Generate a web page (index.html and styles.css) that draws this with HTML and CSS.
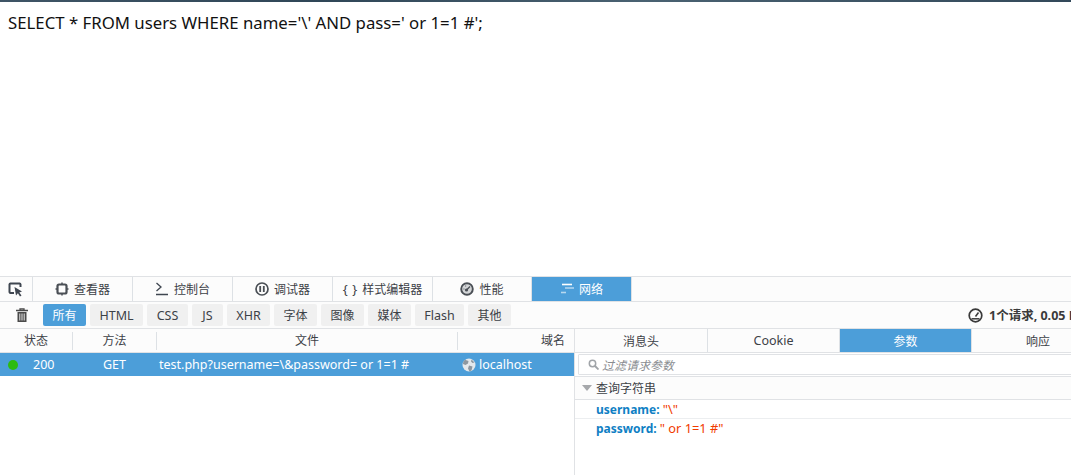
FILE: index.html
```html
<!DOCTYPE html>
<html lang="zh">
<head>
<meta charset="utf-8">
<title>Network</title>
<link rel="stylesheet" href="styles.css">
</head>
<body>
<div class="topstrip"></div>
<main class="page">SELECT * FROM users WHERE name='\' AND pass=' or 1=1 #';</main>
<section class="devtools">
  <nav class="tabs">
    <div class="tab pick"><svg width="16" height="16" viewBox="0 0 16 16"><path d="M6 12H2.500A1.200 1.200 0 0 1 1.500 11V3.500A1.200 1.200 0 0 1 2.500 2.500H11.500A1.200 1.200 0 0 1 12.500 3.500V6" fill="none" stroke="#3f4650" stroke-width="2"/><path d="M6.500 6 L14 10.500 L11.300 11.400 L13.500 14.600 L12 15.500 L9.900 12.300 L8 14.500Z" fill="#3f4650"/></svg></div>
    <div class="tab"><svg width="14" height="14" viewBox="0 0 14 14"><rect x="2.500" y="2.500" width="9" height="9" rx="1.500" fill="none" stroke="#4a4f55" stroke-width="2.200"/><path d="M7 .5v2M7 11.500v2M.5 7h2M11.500 7h2" stroke="#4a4f55" stroke-width="1.500"/></svg><span>查看器</span></div>
    <div class="tab"><svg width="14" height="14" viewBox="0 0 14 14"><path d="M1.500 1 L6 5 L1.500 9M1 12.500H13" fill="none" stroke="#3f4650" stroke-width="1.300"/></svg><span>控制台</span></div>
    <div class="tab"><svg width="14" height="14" viewBox="0 0 14 14"><circle cx="7" cy="7" r="6" fill="none" stroke="#4a4f55" stroke-width="1.700"/><path d="M5.200 4v6M8.800 4v6" stroke="#4a4f55" stroke-width="1.800"/></svg><span>调试器</span></div>
    <div class="tab"><span class="braces">{ }</span><span>样式编辑器</span></div>
    <div class="tab perf"><svg width="14" height="14" viewBox="0 0 14 14"><circle cx="7" cy="7" r="5.800" fill="#d4d6d8" stroke="#4a4f55" stroke-width="1.900"/><circle cx="6.500" cy="8" r="1.600" fill="#4a4f55"/><path d="M6.500 8L10 4.500" stroke="#4a4f55" stroke-width="1.300"/><path d="M3.300 7h1.200M5 4h1.200" stroke="#6a6f75" stroke-width="1"/></svg><span>性能</span></div>
    <div class="tab active"><svg width="14" height="14" viewBox="0 0 14 14"><path d="M2 2.500h10" stroke="#fff" stroke-width="1.600"/><path d="M5 6h9" stroke="#fff" stroke-width="1.600" opacity=".55"/><path d="M1 10.500h5" stroke="#fff" stroke-width="1.600" opacity=".6"/></svg><span>网络</span></div>
  </nav>
  <div class="filters">
    <svg class="trash" width="12" height="14" viewBox="0 0 12 14"><path d="M0 2.500h12M4 2V.800h4V2" fill="none" stroke="#4a4a4a" stroke-width="1.300"/><path d="M1.500 4h9v10h-9z" fill="#4a4a4a"/><path d="M3.800 5.500v7M6 5.500v7M8.200 5.500v7" stroke="#fcfcfc" stroke-width=".9"/></svg>
    <div class="fbtns">
      <span class="fbtn on">所有</span>
      <span class="fbtn lat w-html">HTML</span>
      <span class="fbtn lat w-css">CSS</span>
      <span class="fbtn lat w-js">JS</span>
      <span class="fbtn lat">XHR</span>
      <span class="fbtn">字体</span>
      <span class="fbtn">图像</span>
      <span class="fbtn">媒体</span>
      <span class="fbtn lat w-flash">Flash</span>
      <span class="fbtn">其他</span>
    </div>
    <div class="summary"><svg width="15" height="15" viewBox="0 0 15 15"><circle cx="7.500" cy="7.500" r="6.300" fill="none" stroke="#3a3a3a" stroke-width="1.700"/><path d="M7.500 8.500L10.500 4.500" stroke="#3a3a3a" stroke-width="1.500"/><path d="M3.500 10.800h8" stroke="#3a3a3a" stroke-width="1.500"/></svg><span class="summary-text">1个请求, 0.05 MB</span></div>
  </div>
  <div class="panes">
    <div class="left">
      <div class="thead">
        <div class="th c-status">状态</div>
        <div class="th c-method">方法</div>
        <div class="th c-file">文件</div>
        <div class="th c-domain">域名</div>
      </div>
      <div class="row lat">
        <div class="c-status cell-status"><i class="dot"></i><span>200</span></div>
        <div class="c-method cell-method">GET</div>
        <div class="c-file cell-file">test.php?username=\&amp;password= or 1=1 #</div>
        <div class="c-domain cell-domain"><svg width="14" height="14" viewBox="0 0 14 14"><circle cx="7" cy="7" r="6.500" fill="#e4e8ec"/><path d="M3 1.800L6.500 3 6 5.500 3.500 7 1 6C1 4 2 2.800 3 1.800ZM7 7.500L10.500 8.500 9.500 12.500 7.500 13.500 6 10.500ZM9.500 1.500L12.500 4.500 10.500 5 9 3.500Z" fill="#8d97a0"/></svg><span>localhost</span></div>
      </div>
    </div>
    <div class="right">
      <div class="rtabs">
        <div class="rtab first">消息头</div>
        <div class="rtab lat">Cookie</div>
        <div class="rtab active">参数</div>
        <div class="rtab last">响应</div>
      </div>
      <div class="searchrow">
        <div class="search"><svg width="11" height="11" viewBox="0 0 11 11"><circle cx="4.500" cy="4.500" r="3.200" fill="none" stroke="#a0a4a8" stroke-width="1.500"/><path d="M7 7l3.500 3.500" stroke="#a0a4a8" stroke-width="1.800"/></svg><span>过滤请求参数</span></div>
      </div>
      <div class="group"><i class="twisty"></i><span>查询字符串</span></div>
      <div class="param"><b>username:</b> <span>"\"</span></div>
      <div class="param"><b>password:</b> <span>" or 1=1 #"</span></div>
    </div>
  </div>
</section>
</body>
</html>
```
FILE: styles.css
```css
* { box-sizing: border-box; }
html, body { margin: 0; height: 100%; }
body {
  width: 1071px;
  height: 475px;
  overflow: hidden;
  display: flex;
  flex-direction: column;
  background: #fff;
  font-family: "Noto Sans", "Noto Sans CJK SC", sans-serif;
  font-size: 12px;
  color: #3c4147;
}
.lat { font-size: 12.5px; }
.topstrip {
  height: 2px;
  flex: none;
  background: linear-gradient(90deg, #3f5566, #2f4657 30%, #4a6272 60%, #33495a);
}
.page {
  flex: 1;
  padding: 11px 8px 0;
  font-family: "Noto Sans", sans-serif;
  font-size: 16.78px;
  line-height: 19px;
  color: #111;
}
.devtools {
  flex: none;
  height: 199px;
  display: flex;
  flex-direction: column;
  border-top: 1px solid #e0e2e5;
  overflow: hidden;
}
.tabs {
  display: flex;
  height: 25px;
  flex: none;
  background: #fcfcfc;
  border-bottom: 1px solid #e0e2e5;
}
.tab {
  width: 100px;
  display: flex;
  align-items: center;
  justify-content: center;
  gap: 5px;
  border-right: 1px solid #dde1e5;
}
.tab.pick { width: 33px; }
.tab.perf { width: 99px; }
.tab.active { background: #4c9ed9; color: #fff; }
.braces { font-weight: 400; font-size: 13px; word-spacing: 1px; }
.filters {
  display: flex;
  align-items: center;
  height: 27px;
  flex: none;
  background: #fcfcfc;
  border-bottom: 1px solid #e0e2e5;
  white-space: nowrap;
}
.trash { margin-left: 16px; flex: none; }
.fbtns { display: flex; gap: 4px; margin-left: 15px; }
.fbtn {
  width: 43px;
  height: 22px;
  display: flex;
  align-items: center;
  justify-content: center;
  background: #f0f0f0;
  border-radius: 2px;
}
.fbtn.on { background: #4c9ed9; color: #fff; }
.w-html { width: 53px; }
.w-css { width: 41px; }
.w-js { width: 31px; }
.w-flash { width: 49px; }
.summary {
  position: absolute;
  left: 968px;
  display: flex;
  align-items: center;
  gap: 6px;
  font-size: 12.5px;
  font-weight: 700;
  color: #3a3a3a;
}
.summary-text { margin-top: -2px; }
.panes { flex: 1; display: flex; min-height: 0; }
.left { width: 575px; flex: none; border-right: 1px solid #e0e2e5; }
.thead {
  display: flex;
  height: 24px;
  background: #fcfcfc;
  border-bottom: 1px solid #e0e2e5;
  align-items: center;
}
.th { text-align: center; height: 18px; line-height: 18px; border-right: 1px solid #dde1e5; }
.c-status { width: 73px; flex: none; }
.c-method { width: 84px; flex: none; }
.c-file { width: 301px; flex: none; }
.c-domain { flex: 1; }
.th.c-domain { text-align: right; border-right: 0; padding-right: 9px; }
.row {
  display: flex;
  align-items: center;
  height: 23px;
  background: #4c9ed9;
  color: #fff;
  white-space: nowrap;
}
.cell-status { display: flex; align-items: center; padding-left: 8px; }
.dot { width: 10px; height: 10px; border-radius: 50%; background: #2cbb0f; }
.cell-status span { margin-left: 15px; }
.cell-method { text-align: center; padding-right: 1px; }
.cell-file { padding-left: 2px; }
.cell-domain { display: flex; align-items: center; gap: 3px; padding-left: 4px; }
.right { flex: 1; min-width: 0; overflow: hidden; }
.rtabs {
  display: flex;
  height: 24px;
  background: #fcfcfc;
  border-bottom: 1px solid #e0e2e5;
}
.rtab {
  width: 132px;
  flex: none;
  display: flex;
  align-items: center;
  justify-content: center;
  border-right: 1px solid #dde1e5;
}
.rtab.first { width: 133px; }
.rtab.active { background: #4c9ed9; color: #fff; }
.rtab.last { border-right: 0; }
.searchrow {
  height: 24px;
  padding: 1px 0 0 3px;
  border-bottom: 1px solid #e0e2e5;
}
.search {
  height: 21px;
  width: 600px;
  display: flex;
  align-items: center;
  gap: 3px;
  padding-left: 9px;
  background: #fff;
  border: 1px solid #e0e2e5;
  border-radius: 1px;
  color: #8a8d91;
  font-style: italic;
}
.group {
  display: flex;
  align-items: center;
  height: 23px;
  padding-left: 7px;
  gap: 4px;
  background: #fcfcfc;
  border-bottom: 1px solid #e0e2e5;
}
.twisty {
  width: 0;
  height: 0;
  border-left: 5px solid transparent;
  border-right: 5px solid transparent;
  border-top: 6px solid #a6a8ab;
}
.param {
  height: 19px;
  line-height: 18px;
  padding-left: 21px;
  border-bottom: 1px solid #eceef0;
  white-space: nowrap;
}
.param:last-child { border-bottom: 0; }
.param b { color: #0f7fc4; font-weight: 700; font-size: 12px; }
.param span { color: #f13c00; font-size: 12.8px; }
```
